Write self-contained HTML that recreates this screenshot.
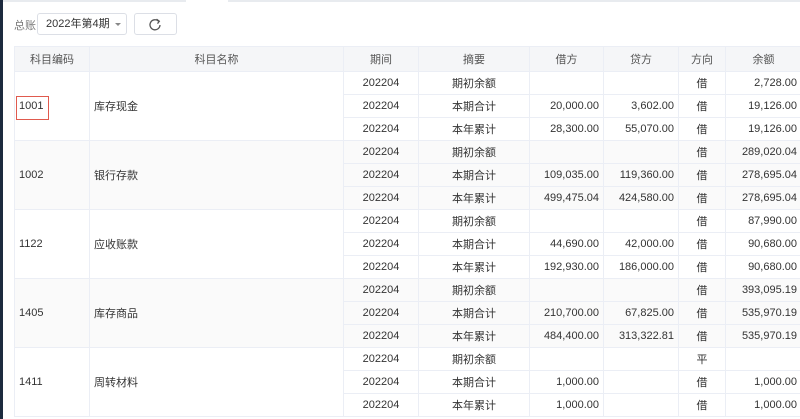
<!DOCTYPE html>
<html><head><meta charset="utf-8"><style>
*{margin:0;padding:0;box-sizing:border-box}
body{width:800px;height:419px;overflow:hidden;background:#fff;font-family:"Liberation Sans","Noto Sans CJK SC",sans-serif;font-size:11px;color:#333;position:relative}
.side{position:absolute;left:0;top:0;width:3px;height:419px;background:#1c2a3e}
.topbar{position:absolute;left:3px;top:0;right:0;height:2px;background:#e8ebef}
.topw{position:absolute;left:186px;top:0;width:42px;height:2px;background:#fff}
.lbl{position:absolute;left:14px;top:17px;color:#777;font-size:11px}
.sel{position:absolute;left:37px;top:13px;width:90px;height:22px;border:1px solid #dcdfe6;border-radius:3px;padding-left:8px;line-height:20px;font-size:11px;color:#333}
.sel .ar{position:absolute;right:5px;top:9px;width:0;height:0;border-left:3px solid transparent;border-right:3px solid transparent;border-top:3px solid #888}
.btn{position:absolute;left:134px;top:13px;width:43px;height:22px;border:1px solid #dcdfe6;border-radius:3px}
table{position:absolute;left:14px;top:46px;border-collapse:collapse;table-layout:fixed;width:787px}
td,th{border:1px solid #ebeef5;height:23px;padding:0 4px;font-weight:normal;white-space:nowrap;overflow:hidden}
th{height:25px;background:#f5f6f8;color:#555;text-align:center}
.c{text-align:center}.r{text-align:right}
tr.g td{background:#fafafa}
.red{position:absolute;left:16px;top:96px;width:33px;height:24px;border:1.5px solid #e05a4e}
</style></head><body>
<div class="side"></div><div class="topbar"></div><div class="topw"></div>
<div class="lbl">总账</div>
<div class="sel">2022年第4期<span class="ar"></span></div>
<div class="btn"><svg width="43" height="22" viewBox="0 0 43 22" style="position:absolute;left:-1px;top:-1px"><path d="M24.5 8.2A5 5 0 1 0 26 12" fill="none" stroke="#555" stroke-width="1.3"/><path d="M22.5 6.2L25.3 8.3L23.5 10.6" fill="none" stroke="#555" stroke-width="1.3"/></svg></div>
<table>
<colgroup><col style="width:75px"><col style="width:254px"><col style="width:75px"><col style="width:111px"><col style="width:74px"><col style="width:75px"><col style="width:47px"><col style="width:76px"></colgroup>
<tr><th>科目编码</th><th>科目名称</th><th>期间</th><th>摘要</th><th>借方</th><th>贷方</th><th>方向</th><th>余额</th></tr>
<tr><td rowspan="3">1001</td><td rowspan="3">库存现金</td><td class="c">202204</td><td class="c">期初余额</td><td></td><td></td><td class="c">借</td><td class="r">2,728.00</td></tr>
<tr><td class="c">202204</td><td class="c">本期合计</td><td class="r">20,000.00</td><td class="r">3,602.00</td><td class="c">借</td><td class="r">19,126.00</td></tr>
<tr><td class="c">202204</td><td class="c">本年累计</td><td class="r">28,300.00</td><td class="r">55,070.00</td><td class="c">借</td><td class="r">19,126.00</td></tr>
<tr class="g"><td rowspan="3">1002</td><td rowspan="3">银行存款</td><td class="c">202204</td><td class="c">期初余额</td><td></td><td></td><td class="c">借</td><td class="r">289,020.04</td></tr>
<tr class="g"><td class="c">202204</td><td class="c">本期合计</td><td class="r">109,035.00</td><td class="r">119,360.00</td><td class="c">借</td><td class="r">278,695.04</td></tr>
<tr class="g"><td class="c">202204</td><td class="c">本年累计</td><td class="r">499,475.04</td><td class="r">424,580.00</td><td class="c">借</td><td class="r">278,695.04</td></tr>
<tr><td rowspan="3">1122</td><td rowspan="3">应收账款</td><td class="c">202204</td><td class="c">期初余额</td><td></td><td></td><td class="c">借</td><td class="r">87,990.00</td></tr>
<tr><td class="c">202204</td><td class="c">本期合计</td><td class="r">44,690.00</td><td class="r">42,000.00</td><td class="c">借</td><td class="r">90,680.00</td></tr>
<tr><td class="c">202204</td><td class="c">本年累计</td><td class="r">192,930.00</td><td class="r">186,000.00</td><td class="c">借</td><td class="r">90,680.00</td></tr>
<tr class="g"><td rowspan="3">1405</td><td rowspan="3">库存商品</td><td class="c">202204</td><td class="c">期初余额</td><td></td><td></td><td class="c">借</td><td class="r">393,095.19</td></tr>
<tr class="g"><td class="c">202204</td><td class="c">本期合计</td><td class="r">210,700.00</td><td class="r">67,825.00</td><td class="c">借</td><td class="r">535,970.19</td></tr>
<tr class="g"><td class="c">202204</td><td class="c">本年累计</td><td class="r">484,400.00</td><td class="r">313,322.81</td><td class="c">借</td><td class="r">535,970.19</td></tr>
<tr><td rowspan="3">1411</td><td rowspan="3">周转材料</td><td class="c">202204</td><td class="c">期初余额</td><td></td><td></td><td class="c">平</td><td class="r"></td></tr>
<tr><td class="c">202204</td><td class="c">本期合计</td><td class="r">1,000.00</td><td class="r"></td><td class="c">借</td><td class="r">1,000.00</td></tr>
<tr><td class="c">202204</td><td class="c">本年累计</td><td class="r">1,000.00</td><td class="r"></td><td class="c">借</td><td class="r">1,000.00</td></tr>
</table>
<div class="red"></div>
</body></html>
